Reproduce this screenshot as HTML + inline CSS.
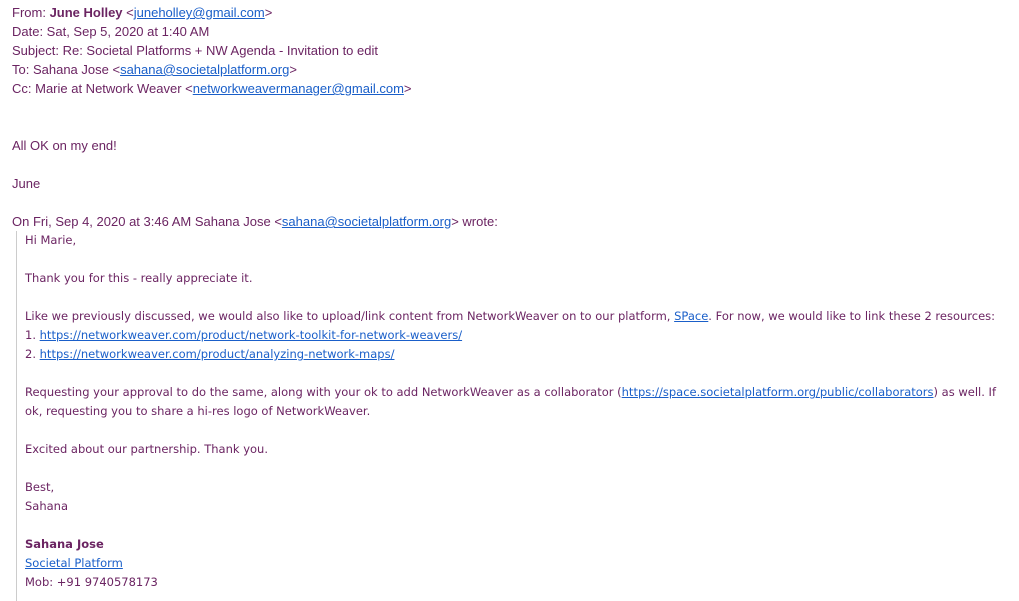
<!DOCTYPE html>
<html><head><meta charset="utf-8"><style>
html,body{margin:0;padding:0;background:#fff;width:1019px;height:592px;overflow:hidden}
body{color:#6b2462;}
.h{position:absolute;left:12px;font-family:"Liberation Sans",Arial,sans-serif;font-size:13px;line-height:19px;white-space:nowrap}
.q{position:absolute;left:25px;font-family:"DejaVu Sans",sans-serif;font-size:11.5px;line-height:19px;white-space:nowrap}
a{color:#1a5fc9;text-decoration:underline}
.bar{position:absolute;left:16px;top:231px;width:1px;height:370px;background:#ccc}
</style></head><body>
<div class="h" style="top:3px">From: <b>June Holley</b> &lt;<a>juneholley@gmail.com</a>&gt;</div>
<div class="h" style="top:22px">Date: Sat, Sep 5, 2020 at 1:40 AM</div>
<div class="h" style="top:41px">Subject: Re: Societal Platforms + NW Agenda - Invitation to edit</div>
<div class="h" style="top:60px">To: Sahana Jose &lt;<a>sahana@societalplatform.org</a>&gt;</div>
<div class="h" style="top:79px">Cc: Marie at Network Weaver &lt;<a>networkweavermanager@gmail.com</a>&gt;</div>
<div class="h" style="top:136px">All OK on my end!</div>
<div class="h" style="top:174px">June</div>
<div class="h" style="top:212px">On Fri, Sep 4, 2020 at 3:46 AM Sahana Jose &lt;<a>sahana@societalplatform.org</a>&gt; wrote:</div>
<div class="bar"></div>
<div class="q" style="top:231px">Hi Marie,</div>
<div class="q" style="top:269px">Thank you for this - really appreciate it.</div>
<div class="q" style="top:307px">Like we previously discussed, we would also like to upload/link content from NetworkWeaver on to our platform, <a>SPace</a>. For now, we would like to link these 2 resources:</div>
<div class="q" style="top:326px">1. <a>https://networkweaver.com/product/network-toolkit-for-network-weavers/</a></div>
<div class="q" style="top:345px">2. <a>https://networkweaver.com/product/analyzing-network-maps/</a></div>
<div class="q" style="top:383px">Requesting your approval to do the same, along with your ok to add NetworkWeaver as a collaborator (<a>https://space.societalplatform.org/public/collaborators</a>) as well. If</div>
<div class="q" style="top:402px">ok, requesting you to share a hi-res logo of NetworkWeaver.</div>
<div class="q" style="top:440px">Excited about our partnership. Thank you.</div>
<div class="q" style="top:478px">Best,</div>
<div class="q" style="top:497px">Sahana</div>
<div class="q" style="top:535px"><b>Sahana Jose</b></div>
<div class="q" style="top:554px"><a>Societal Platform</a></div>
<div class="q" style="top:573px">Mob: +91 9740578173</div>
</body></html>
